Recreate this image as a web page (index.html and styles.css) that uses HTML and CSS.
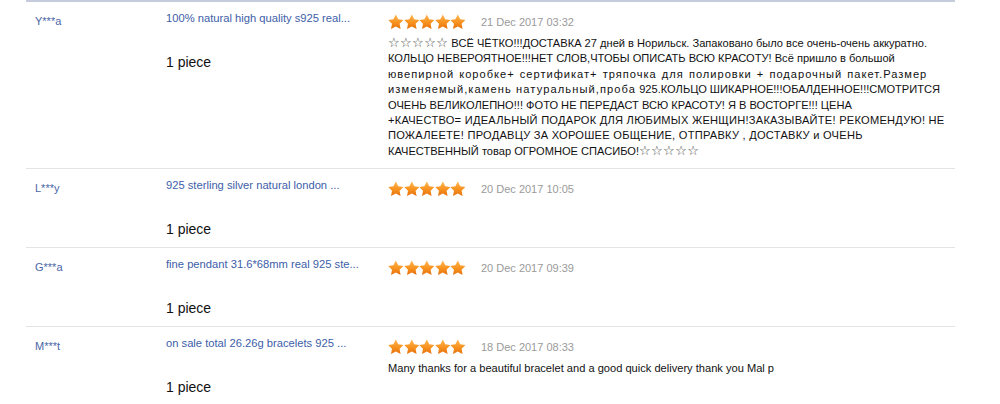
FILE: index.html
```html
<!DOCTYPE html>
<html lang="en">
<head>
<meta charset="utf-8">
<title>Feedback</title>
<link rel="stylesheet" href="styles.css">
</head>
<body>
<svg class="defs" width="0" height="0" aria-hidden="true">
  <defs>
    <linearGradient id="sg" x1="0" y1="0" x2="0" y2="1">
      <stop offset="0" stop-color="#ffb651"/>
      <stop offset="0.55" stop-color="#f7921f"/>
      <stop offset="1" stop-color="#e4700d"/>
    </linearGradient>
    <symbol id="star" viewBox="0 0 16 16">
      <polygon points="8,0.4 10.5,5.3 15.8,6.0 11.9,9.8 12.9,15.2 8,12.6 3.1,15.2 4.1,9.8 0.2,6.0 5.5,5.3" fill="url(#sg)"/>
    </symbol>
  </defs>
</svg>
<div class="feedback">
  <div class="row">
    <div class="name">Y***a</div>
    <div class="product">
      <a class="title" href="#">100% natural high quality s925 real...</a>
      <div class="qty">1 piece</div>
    </div>
    <div class="review">
      <div class="meta">
        <span class="stars"><svg><use href="#star"/></svg><svg><use href="#star"/></svg><svg><use href="#star"/></svg><svg><use href="#star"/></svg><svg><use href="#star"/></svg></span>
        <span class="date">21 Dec 2017 03:32</span>
      </div>
      <p class="text"><span class="hs">☆☆☆☆☆</span> ВСЁ ЧЁТКО!!!ДОСТАВКА 27 дней в Норильск. Запаковано было все очень-очень аккуратно.<br>КОЛЬЦО НЕВЕРОЯТНОЕ!!!НЕТ СЛОВ,ЧТОБЫ ОПИСАТЬ ВСЮ КРАСОТУ! Всё пришло в большой<br><span class="lc">ювепирной коробке+ сертификат+ тряпочка для полировки + подарочный пакет.Размер</span><br><span class="lc4">изменяемый,камень натуральный,проба</span> 925.КОЛЬЦО ШИКАРНОЕ!!!ОБАЛДЕННОЕ!!!СМОТРИТСЯ<br>ОЧЕНЬ ВЕЛИКОЛЕПНО!!! ФОТО НЕ ПЕРЕДАСТ ВСЮ КРАСОТУ! Я В ВОСТОРГЕ!!! ЦЕНА<br><span class="cs">+КАЧЕСТВО= ИДЕАЛЬНЫЙ ПОДАРОК ДЛЯ ЛЮБИМЫХ ЖЕНЩИН!ЗАКАЗЫВАЙТЕ! РЕКОМЕНДУЮ! НЕ</span><br><span class="cs">ПОЖАЛЕЕТЕ! ПРОДАВЦУ ЗА ХОРОШЕЕ ОБЩЕНИЕ, ОТПРАВКУ , ДОСТАВКУ и ОЧЕНЬ</span><br>КАЧЕСТВЕННЫЙ товар ОГРОМНОЕ СПАСИБО!<span class="hs">☆☆☆☆☆</span></p>
    </div>
  </div>
  <div class="row">
    <div class="name">L***y</div>
    <div class="product">
      <a class="title" href="#">925 sterling silver natural london ...</a>
      <div class="qty">1 piece</div>
    </div>
    <div class="review">
      <div class="meta">
        <span class="stars"><svg><use href="#star"/></svg><svg><use href="#star"/></svg><svg><use href="#star"/></svg><svg><use href="#star"/></svg><svg><use href="#star"/></svg></span>
        <span class="date">20 Dec 2017 10:05</span>
      </div>
    </div>
  </div>
  <div class="row">
    <div class="name">G***a</div>
    <div class="product">
      <a class="title" href="#">fine pendant 31.6*68mm real 925 ste...</a>
      <div class="qty">1 piece</div>
    </div>
    <div class="review">
      <div class="meta">
        <span class="stars"><svg><use href="#star"/></svg><svg><use href="#star"/></svg><svg><use href="#star"/></svg><svg><use href="#star"/></svg><svg><use href="#star"/></svg></span>
        <span class="date">20 Dec 2017 09:39</span>
      </div>
    </div>
  </div>
  <div class="row">
    <div class="name">M***t</div>
    <div class="product">
      <a class="title" href="#">on sale total 26.26g bracelets 925 ...</a>
      <div class="qty">1 piece</div>
    </div>
    <div class="review">
      <div class="meta">
        <span class="stars"><svg><use href="#star"/></svg><svg><use href="#star"/></svg><svg><use href="#star"/></svg><svg><use href="#star"/></svg><svg><use href="#star"/></svg></span>
        <span class="date">18 Dec 2017 08:33</span>
      </div>
      <p class="text">Many thanks for a beautiful bracelet and a good quick delivery thank you Mal p</p>
    </div>
  </div>
</div>
</body>
</html>
```

FILE: styles.css
```css
html, body {
  margin: 0;
  padding: 0;
  background: #fff;
}
body {
  font-family: "Liberation Sans", Arial, sans-serif;
  color: #000;
  overflow: hidden;
}
.defs {
  position: absolute;
  width: 0;
  height: 0;
}
.feedback {
  margin-left: 26px;
  width: 929px;
  border-top: 2px solid #c6ccdc;
}
.row {
  display: grid;
  grid-template-columns: 140px 222px 1fr;
  padding: 8px 0 9px;
  border-bottom: 1px solid #e4e4e4;
}
.name {
  padding-left: 9px;
  margin-top: 3px;
  font-size: 11px;
  line-height: 16px;
  color: #4b66a6;
}
.product {
  display: flex;
  flex-direction: column;
}
.title {
  font-size: 11.2px;
  line-height: 16px;
  color: #3d5ea8;
  text-decoration: none;
}
.qty {
  margin-top: 27px;
  font-size: 14px;
  line-height: 18px;
  color: #111;
}
.meta {
  display: flex;
  align-items: center;
  margin-top: 3px;
  height: 17px;
}
.stars {
  display: flex;
}
.stars svg {
  width: 15.6px;
  height: 16px;
}
.date {
  margin-left: 15px;
  font-size: 11px;
  color: #9a9a9a;
}
.text {
  margin: 6px 0 0;
  font-size: 11.1px;
  line-height: 15.4px;
  color: #111;
  white-space: nowrap;
}
.lc {
  letter-spacing: 1px;
  word-spacing: 1px;
}
.lc4 {
  letter-spacing: 1.1px;
}
.cs {
  letter-spacing: 0.25px;
}
.hs {
  font-family: "DejaVu Sans", sans-serif;
  font-size: 13px;
  line-height: 1;
  letter-spacing: 0.4px;
  color: #444;
}
```
